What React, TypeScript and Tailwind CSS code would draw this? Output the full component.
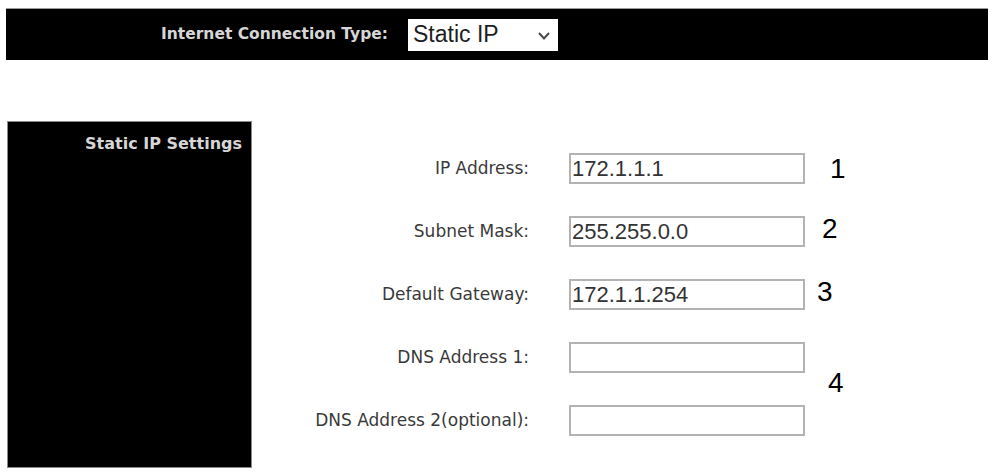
import React from "react";

const rows: { label: string; value: string; num?: string; numCls?: string }[] = [
  { label: "IP Address:", value: "172.1.1.1", num: "1", numCls: "pl-[25px]" },
  { label: "Subnet Mask:", value: "255.255.0.0", num: "2", numCls: "pl-[17px] -mt-[6px]" },
  { label: "Default Gateway:", value: "172.1.1.254", num: "3", numCls: "pl-[12px] -mt-[6px]" },
  { label: "DNS Address 1:", value: "" },
  { label: "DNS Address 2(optional):", value: "" },
];

export default function App() {
  return (
    <div className="w-[995px] h-[473px] bg-white overflow-hidden relative">
      {/* Top bar */}
      <div className="ml-[6px] mt-[8px] w-[982px] h-[52px] bg-black border-t border-[#9a9a9a] flex items-center pl-[155px]">
        <span className="font-['DejaVu_Sans',sans-serif] font-bold text-[15.5px] text-[#d6d6d6] leading-none">
          Internet Connection Type:
        </span>
        <div className="ml-[20px] w-[150px] h-[32px] bg-white flex items-center justify-between pl-[5px] pr-[8px]">
          <span className="font-['Liberation_Sans',Arial,sans-serif] text-[23px] text-[#1e1e1e] leading-none">
            Static IP
          </span>
          <svg width="12" height="8" viewBox="0 0 12 8" className="mt-[3px]">
            <polyline points="1,1 6,6.5 11,1" fill="none" stroke="#4a4a4a" strokeWidth="2" />
          </svg>
        </div>
      </div>

      {/* Main section */}
      <div className="flex mt-[61px] ml-[7px]">
        <div className="w-[245px] h-[347px] bg-black border border-[#8a8a8a] text-right pr-[9px] pt-[9px]">
          <span className="font-['DejaVu_Sans',sans-serif] font-bold text-[16px] text-[#d6d6d6]">
            Static IP Settings
          </span>
        </div>

        <div className="grid grid-cols-[278px_236px_auto] auto-rows-[31px] gap-y-[32px] gap-x-[39px] mt-[32px] h-fit">
          {rows.map((r, i) => (
            <React.Fragment key={r.label}>
              <div className="flex items-center justify-end font-['DejaVu_Sans',sans-serif] text-[17px] text-[#3a3a3a] pr-[1px]">
                {r.label}
              </div>
              <input
                readOnly
                defaultValue={r.value}
                className="w-[236px] h-[31px] border-2 border-[#b3b3b3] bg-white px-[1px] font-['Liberation_Sans',Arial,sans-serif] text-[22px] text-[#333] outline-none"
              />
              {r.num ? (
                <div
                  className={`-ml-[39px] flex items-center self-center font-['Liberation_Sans',Arial,sans-serif] text-[28px] text-black leading-none ${r.numCls}`}
                >
                  {r.num}
                </div>
              ) : i === 3 ? (
                <div className="-ml-[39px] row-span-2 self-center -mt-[12px] pl-[23px] font-['Liberation_Sans',Arial,sans-serif] text-[28px] text-black leading-none">
                  4
                </div>
              ) : null}
            </React.Fragment>
          ))}
        </div>
      </div>
    </div>
  );
}
